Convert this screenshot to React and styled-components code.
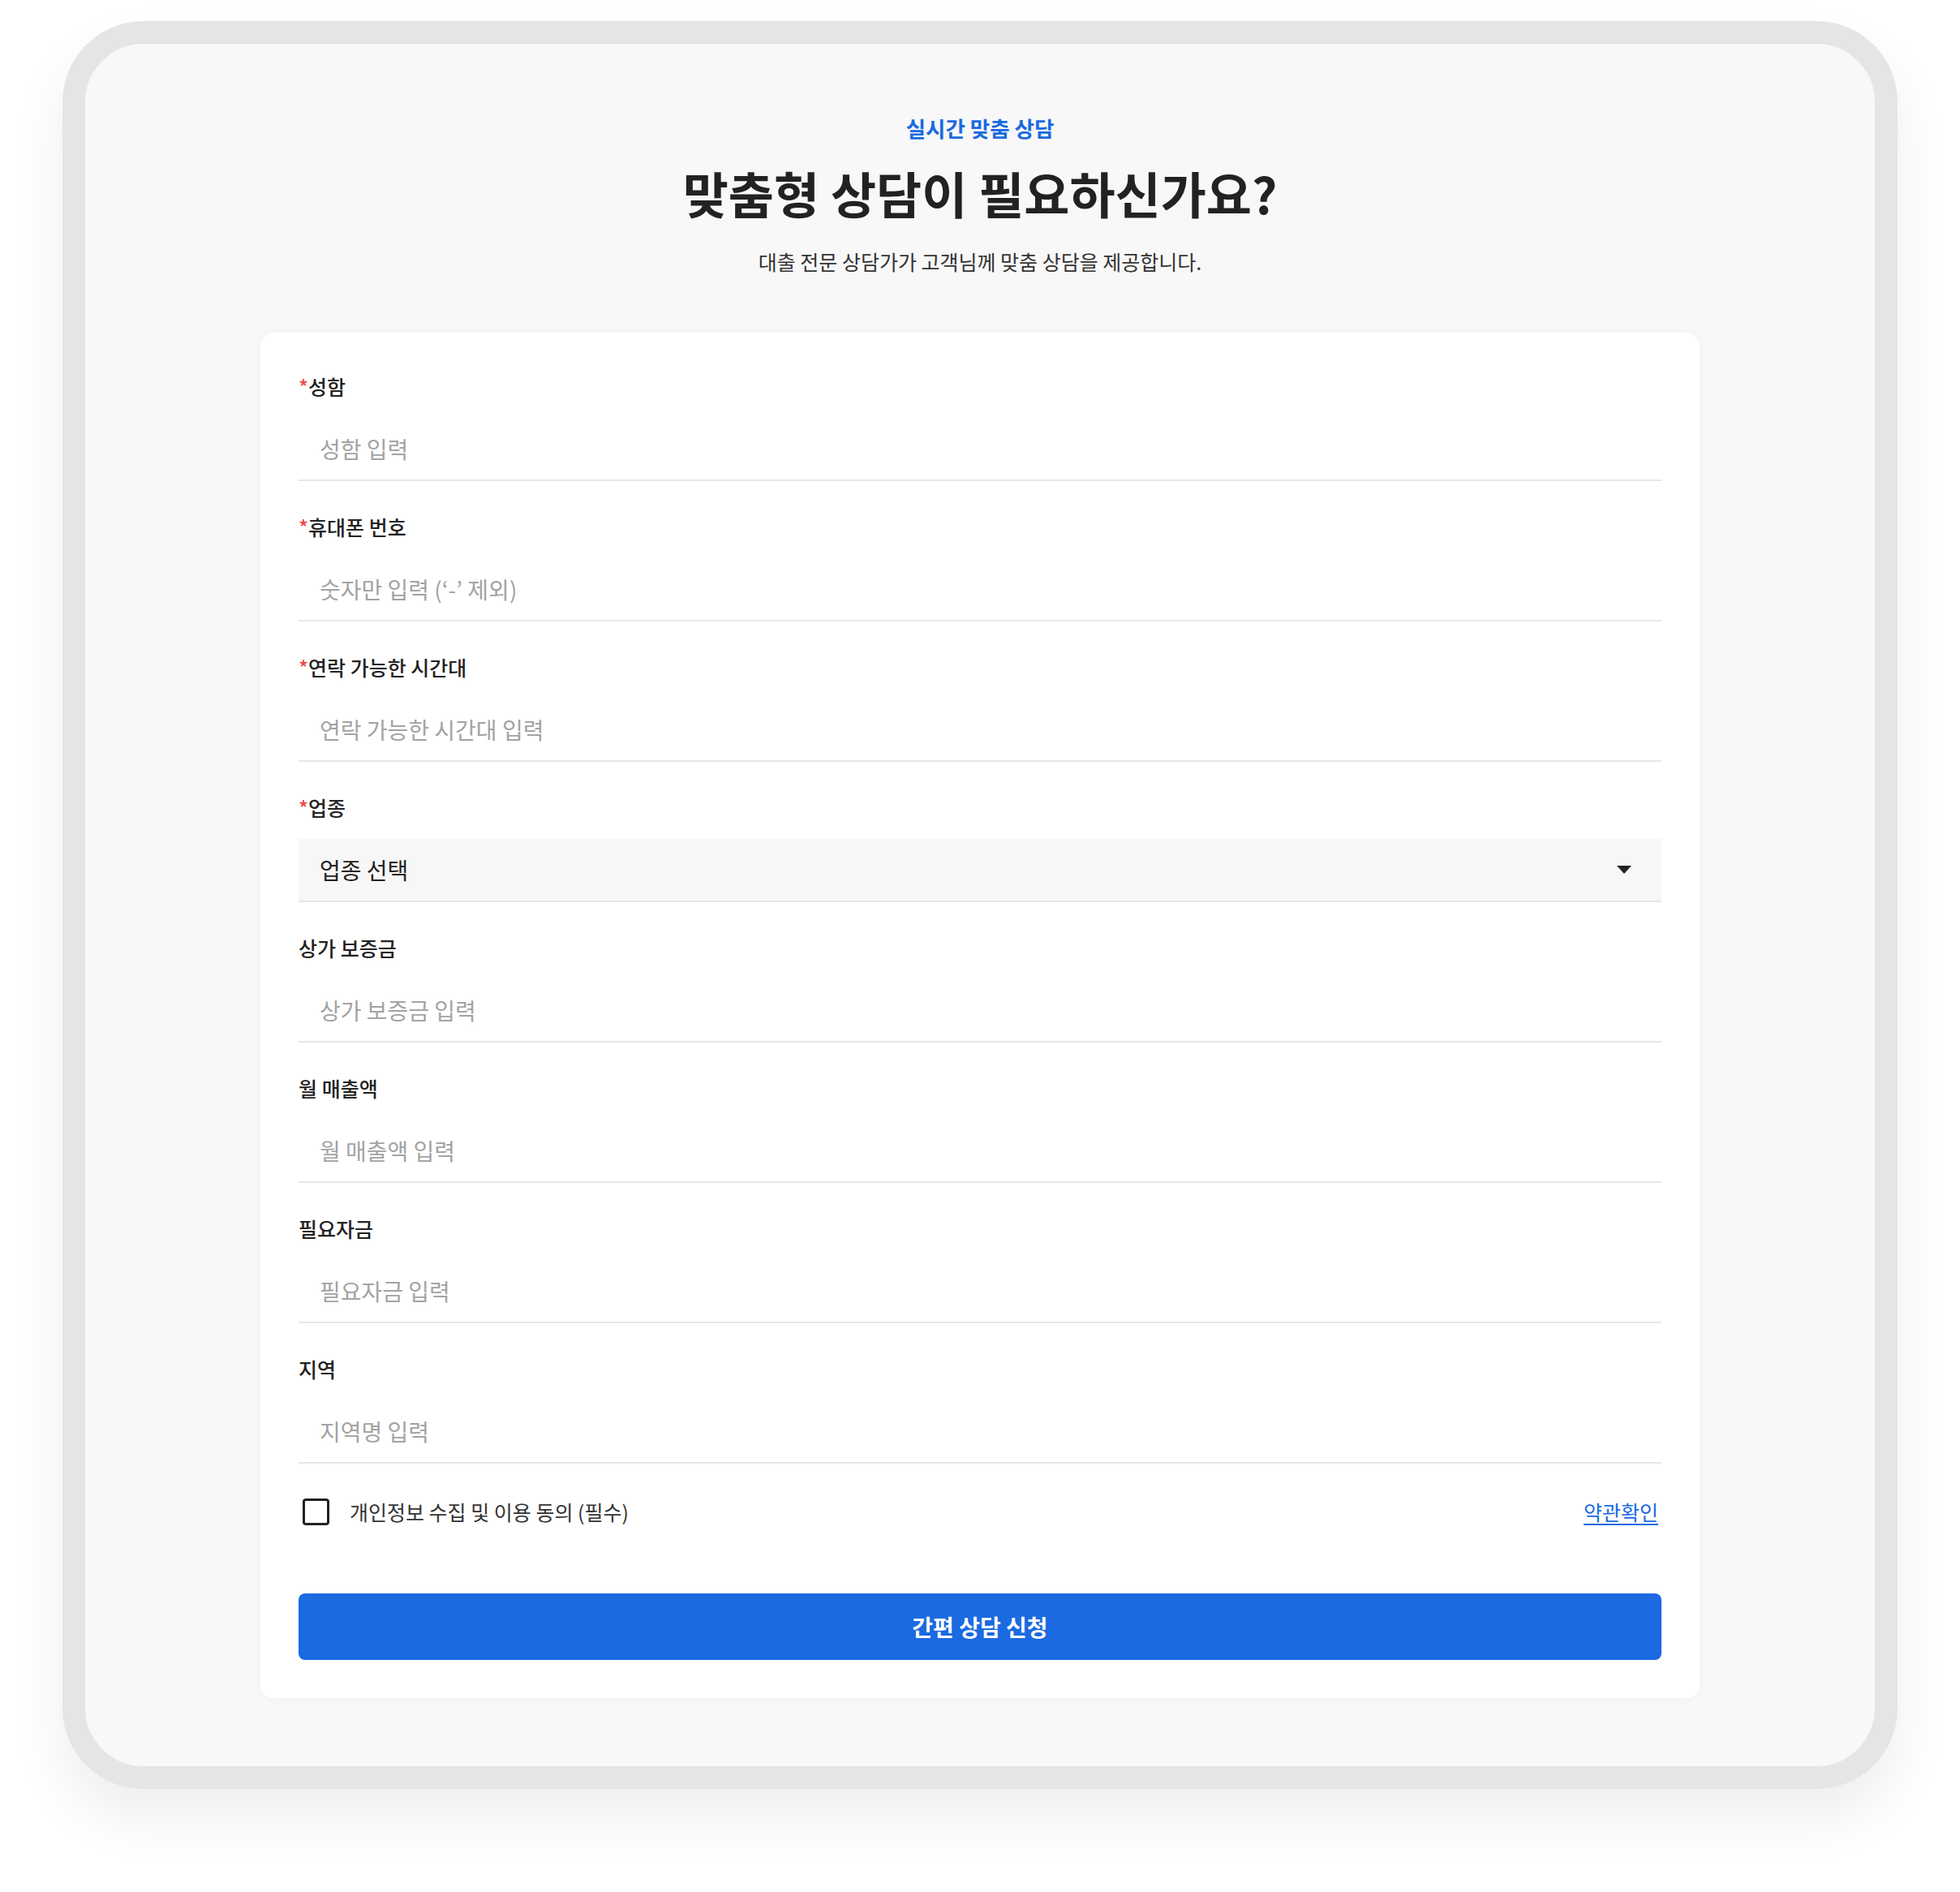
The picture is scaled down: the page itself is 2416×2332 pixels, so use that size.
import React from "react";
import styled, { createGlobalStyle } from "styled-components";

const GlobalStyle = createGlobalStyle`
  * {
    box-sizing: border-box;
  }
  body {
    margin: 0;
    background: #ffffff;
    font-family: "Noto Sans CJK KR", "Noto Sans", sans-serif;
    color: #222222;
  }
`;

const Page = styled.div`
  padding: 26px 77px 126px;
`;

const Frame = styled.div`
  border: 28px solid #e5e5e7;
  border-radius: 100px;
  background: #f8f8f8;
  box-shadow: 0px 36px 70px rgba(0, 0, 0, 0.07);
  padding: 86px 0 84px;
`;

const Header = styled.div`
  display: flex;
  flex-direction: column;
  align-items: center;
  text-align: center;
`;

const Eyebrow = styled.div`
  font-size: 26.5px;
  line-height: 36px;
  font-weight: 700;
  color: #1a6ae0;
`;

const Title = styled.h1`
  margin: 26px 0 0;
  font-size: 61px;
  line-height: 72px;
  font-weight: 700;
  color: #222222;
`;

const Subtitle = styled.p`
  margin: 31px 0 0;
  font-size: 25px;
  line-height: 34px;
  color: #333333;
`;

const Card = styled.div`
  width: 1774px;
  margin: 71px auto 0;
  background: #ffffff;
  border-radius: 16px;
  box-shadow: 0px 0px 12px rgba(0, 0, 0, 0.035);
  padding: 49px 47px 47px;
`;

const Form = styled.form`
  display: flex;
  flex-direction: column;
  gap: 39px;
`;

const Field = styled.div`
  display: flex;
  flex-direction: column;
  gap: 22px;
`;

const Label = styled.label`
  font-size: 25px;
  line-height: 34px;
  font-weight: 500;
  color: #222222;
`;

const Star = styled.span`
  color: #f04848;
`;

const TextInput = styled.input`
  height: 78px;
  width: 100%;
  border: none;
  border-bottom: 2px solid #e6e6e6;
  background: transparent;
  padding: 0 26px;
  font-family: inherit;
  font-size: 28px;
  color: #222222;
  outline: none;

  &::placeholder {
    color: #a3a3a3;
  }
`;

const SelectBox = styled.button`
  height: 78px;
  width: 100%;
  display: flex;
  align-items: center;
  justify-content: space-between;
  border: none;
  border-bottom: 2px solid #e4e4e9;
  background: #f7f7f7;
  padding: 0 37px 0 26px;
  font-family: inherit;
  font-size: 28px;
  color: #222222;
  cursor: pointer;
`;

const AgreeRow = styled.div`
  display: flex;
  align-items: center;
  height: 34px;
  margin-top: 3px;
  padding-left: 5px;
`;

const CheckBox = styled.span`
  width: 33px;
  height: 33px;
  border: 3px solid #222222;
  border-radius: 4px;
  flex-shrink: 0;
`;

const AgreeText = styled.span`
  margin-left: 25px;
  font-size: 25px;
  line-height: 34px;
  color: #333333;
`;

const TermsLink = styled.a`
  margin-left: auto;
  margin-right: 4px;
  font-size: 25px;
  line-height: 34px;
  color: #1a6ae0;
  text-decoration: underline;
  text-underline-offset: 4px;
`;

const SubmitButton = styled.button`
  margin-top: 45px;
  height: 82px;
  width: 100%;
  border: none;
  border-radius: 8px;
  background: #1b6ae1;
  color: #ffffff;
  font-family: inherit;
  font-size: 28px;
  font-weight: 700;
  cursor: pointer;
`;

const fields = [
  { label: "성함", required: true, placeholder: "성함 입력" },
  { label: "휴대폰 번호", required: true, placeholder: "숫자만 입력 (‘-’ 제외)" },
  { label: "연락 가능한 시간대", required: true, placeholder: "연락 가능한 시간대 입력" },
  { label: "업종", required: true, select: "업종 선택" },
  { label: "상가 보증금", placeholder: "상가 보증금 입력" },
  { label: "월 매출액", placeholder: "월 매출액 입력" },
  { label: "필요자금", placeholder: "필요자금 입력" },
  { label: "지역", placeholder: "지역명 입력" },
];

const Caret = () => (
  <svg width="18" height="10" viewBox="0 0 18 10">
    <path d="M0 0 H18 L9 10 Z" fill="#222222" />
  </svg>
);

const App = () => {
  return (
    <>
      <GlobalStyle />
      <Page>
        <Frame>
          <Header>
            <Eyebrow>실시간 맞춤 상담</Eyebrow>
            <Title>맞춤형 상담이 필요하신가요?</Title>
            <Subtitle>대출 전문 상담가가 고객님께 맞춤 상담을 제공합니다.</Subtitle>
          </Header>
          <Card>
            <Form onSubmit={(e) => e.preventDefault()}>
              {fields.map((f) => (
                <Field key={f.label}>
                  <Label>
                    {f.required && <Star>*</Star>}
                    {f.label}
                  </Label>
                  {f.select ? (
                    <SelectBox type="button">
                      <span>{f.select}</span>
                      <Caret />
                    </SelectBox>
                  ) : (
                    <TextInput type="text" placeholder={f.placeholder} />
                  )}
                </Field>
              ))}
              <AgreeRow>
                <CheckBox />
                <AgreeText>개인정보 수집 및 이용 동의 (필수)</AgreeText>
                <TermsLink href="#">약관확인</TermsLink>
              </AgreeRow>
              <SubmitButton type="submit">간편 상담 신청</SubmitButton>
            </Form>
          </Card>
        </Frame>
      </Page>
    </>
  );
};

export default App;
